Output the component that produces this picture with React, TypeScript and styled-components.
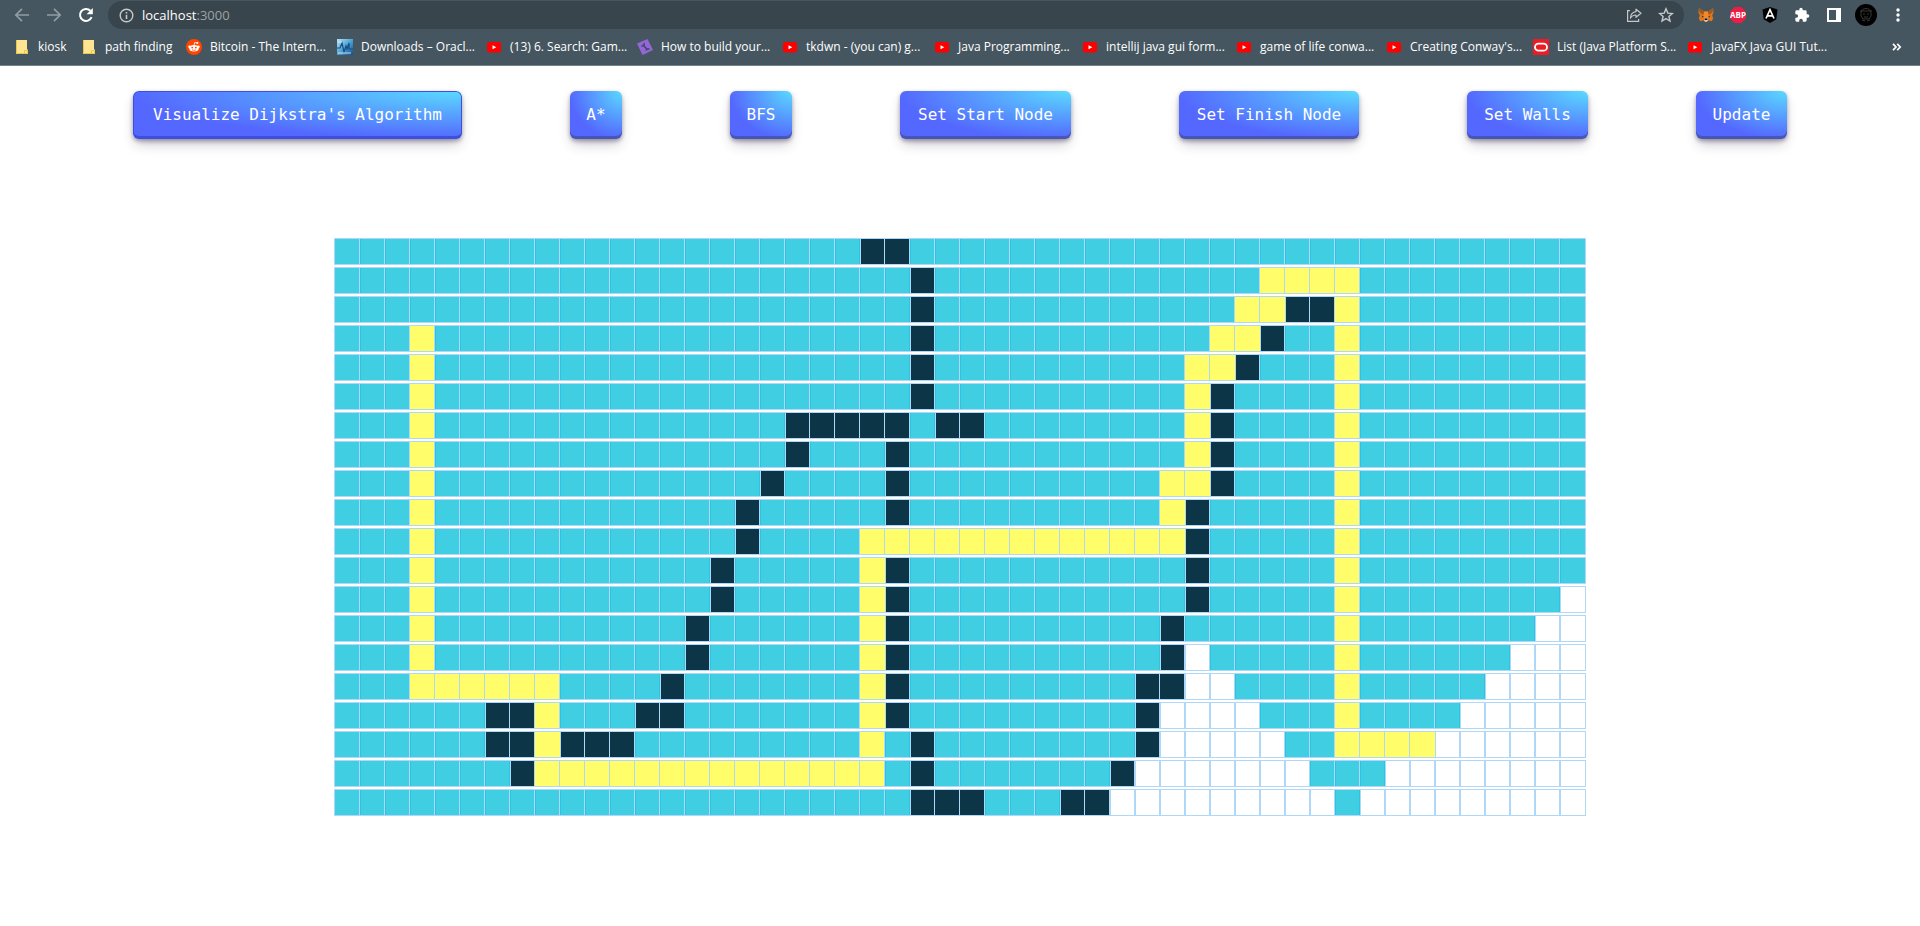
import React from 'react';
import styled, { createGlobalStyle, css } from 'styled-components';

const GlobalStyle = createGlobalStyle`
  *, *::before, *::after { box-sizing: border-box; }
  body { margin: 0; background: #fff; font-family: "Open Sans", "Noto Sans", sans-serif; }
`;

/* ---------- browser bar ---------- */

const BrowserBar = styled.header`
  background: #455660;
  border-bottom: 1px solid #74828a;
  height: 66px;
  overflow: hidden;
`;

const NavRow = styled.div`
  display: flex;
  align-items: center;
  height: 30px;
  padding: 0 14px;
`;

const NavButtons = styled.div`
  display: flex;
  gap: 16px;
  margin-right: 14px;
`;

const IconButton = styled.button<{ $dim?: boolean }>`
  display: flex;
  align-items: center;
  justify-content: center;
  width: 16px;
  height: 16px;
  padding: 0;
  border: 0;
  background: none;
  color: ${(p) => (p.$dim ? '#929ca1' : '#fff')};
`;

const AddressBar = styled.div`
  flex: 1;
  display: flex;
  align-items: center;
  gap: 8px;
  height: 28px;
  padding: 0 10px 0 11px;
  border-radius: 14px;
  background: #39454c;
  color: #c4c8ca;
`;

const AddressField = styled.label`
  flex: 1;
  position: relative;
  display: flex;
  align-items: center;
  font-size: 13px;
  line-height: 18px;
  color: #9ba2a6;
  b { font-weight: 400; color: #fff; }
`;

const AddressInput = styled.input`
  position: absolute;
  inset: 0;
  width: 100%;
  border: 0;
  padding: 0;
  background: transparent;
  outline: none;
`;

const AddressActions = styled.div`
  display: flex;
  gap: 16px;
  button { color: #c4c8ca; }
`;

const Extensions = styled.div`
  display: flex;
  align-items: center;
  gap: 16px;
  margin-left: 14px;
`;

const Avatar = styled.button`
  display: flex;
  width: 22px;
  height: 22px;
  margin: 0 -3px;
  padding: 0;
  border: 0;
  border-radius: 50%;
  background: #000;
`;

const BookmarkRow = styled.nav`
  display: flex;
  align-items: center;
  height: 34px;
  padding: 0 15px 0 14px;
`;

const Bookmark = styled.a<{ $width: number }>`
  flex: none;
  display: flex;
  align-items: center;
  gap: 8px;
  width: ${(p) => p.$width}px;
  font-size: 12px;
  line-height: 16px;
  color: #fff;
  white-space: nowrap;
  text-decoration: none;
  svg { flex: none; }
`;

const More = styled(IconButton)`
  margin-left: auto;
`;

const Back = () => (
  <svg width="16" height="16" viewBox="0 0 16 16" fill="none" stroke="currentColor" strokeWidth="1.7">
    <path d="M15 8H2M8 1.8 1.8 8 8 14.2" />
  </svg>
);
const Forward = () => (
  <svg width="16" height="16" viewBox="0 0 16 16" fill="none" stroke="currentColor" strokeWidth="1.7">
    <path d="M1 8h13M8 1.8 14.2 8 8 14.2" />
  </svg>
);
const Reload = () => (
  <svg width="16" height="16" viewBox="0 0 16 16" fill="none">
    <path d="M13.6 10.2A6 6 0 1 1 12.4 3.8" stroke="currentColor" strokeWidth="2" />
    <path d="M14.8 1v6.2H8.6z" fill="currentColor" />
  </svg>
);
const Info = () => (
  <svg width="15" height="15" viewBox="0 0 15 15" fill="none" stroke="currentColor">
    <circle cx="7.5" cy="7.5" r="6.3" strokeWidth="1.4" />
    <path d="M7.5 6.8V11M7.5 4v1.6" strokeWidth="1.6" />
  </svg>
);
const Share = () => (
  <svg width="16" height="16" viewBox="0 0 16 16" fill="none" stroke="currentColor" strokeWidth="1.2">
    <path d="M4 3.6H1.6v10.8h11V12" />
    <path d="M10 2.2 15 6.3l-5 4V8C7.4 8 5.6 9 4.4 11.2 4.6 7.6 6.6 5 10 4.6z" strokeLinejoin="round" />
  </svg>
);
const Star = () => (
  <svg width="16" height="16" viewBox="0 0 16 16" fill="none" stroke="currentColor" strokeWidth="1.4">
    <path d="m8 1.8 1.8 4.3 4.6.4-3.5 3 1.1 4.5L8 11.6 4 14l1.100-4.500-3.500-3 4.600-.4z" />
  </svg>
);
const Fox = () => (
  <svg width="18" height="16" viewBox="0 0 18 16">
    <path d="M1 .5 7 4h4l6-3.500.5 5L16 8l1 4-1.500 3-4-1L10 16H8l-1.500-2-4 1L1 12l1-4L.5 5.500z" fill="#e2761b" />
    <path d="M1 .5 7 4 6 8 1.500 5zM17 .5 11 4l1 4 4.500-3z" fill="#a4581c" />
    <path d="M7 4h4l1 5-1.500 3h-3L6 9z" fill="#f08a2a" />
    <path d="M4 8.600 6.600 10 5 10.700zM14 8.600 11.400 10l1.600.7z" fill="#2f343b" />
    <path d="M7 12h4l.5 2L10 15.500H8L6.500 14z" fill="#d7c1b3" />
    <path d="M7.600 12h2.800l.3 1.500H7.300z" fill="#161616" />
  </svg>
);
const AdBlock = () => (
  <svg width="16" height="16" viewBox="0 0 16 16">
    <path d="M4.700 0h6.600L16 4.700v6.600L11.300 16H4.700L0 11.300V4.700z" fill="#ed1e45" />
    <text x="8" y="11" textAnchor="middle" fontFamily="Open Sans, sans-serif" fontWeight="700" fontSize="8" fill="#fff">ABP</text>
  </svg>
);
const Shield = () => (
  <svg width="16" height="16" viewBox="0 0 16 16">
    <path d="m8 0 7.500 2.600-1.200 9.700L8 16l-6.300-3.700L.5 2.600z" fill="#000" />
    <path d="M4 11.500 8 2.700l4 8.800M5.600 8.800h4.800" fill="none" stroke="#fff" strokeWidth="1.700" />
  </svg>
);
const Puzzle = () => (
  <svg width="16" height="16" viewBox="0 0 24 24" fill="#fff">
    <path d="M20.500 11H19V7a2 2 0 0 0-2-2h-4V3.500a2.500 2.500 0 0 0-5 0V5H4a2 2 0 0 0-2 2v3.800h1.500a2.700 2.700 0 0 1 0 5.400H2V20a2 2 0 0 0 2 2h3.800v-1.500a2.700 2.700 0 0 1 5.400 0V22H17a2 2 0 0 0 2-2v-4h1.500a2.500 2.500 0 0 0 0-5z" />
  </svg>
);
const SidePanel = () => (
  <svg width="14" height="14" viewBox="0 0 14 14">
    <path d="M0 0h14v14H0zM2 2v10h7V2z" fill="#fff" fillRule="evenodd" />
  </svg>
);
const Face = () => (
  <svg width="22" height="22" viewBox="0 0 22 22" fill="none" stroke="#3c3c3c">
    <path d="M6 9c0-6 10-6 10 0v3l-2 3H8l-2-3zM5 7h12M8 10h2M12 10h2M9 13h4M7 16l3 1M15 16l-3 1" strokeWidth=".9" />
  </svg>
);
const Dots = () => (
  <svg width="4" height="14" viewBox="0 0 4 14" fill="#fff">
    <circle cx="2" cy="2" r="1.700" /><circle cx="2" cy="7" r="1.700" /><circle cx="2" cy="12" r="1.700" />
  </svg>
);
const Chevrons = () => (
  <svg width="10" height="8" viewBox="0 0 10 8" fill="none" stroke="#fff" strokeWidth="1.700">
    <path d="m1 .8 3 3.200-3 3.200M5.200.8l3 3.200-3 3.200" />
  </svg>
);

const Folder = () => (
  <svg width="16" height="16" viewBox="0 0 16 16">
    <path d="M2 1h11v9l1 1v4H2z" fill="#ffe591" />
    <path d="M2.500 1v13.500H11M10.500 14.500v-3h3v3z" fill="none" stroke="#e8c64e" />
  </svg>
);
const Reddit = () => (
  <svg width="16" height="16" viewBox="0 0 16 16">
    <circle cx="8" cy="8" r="8" fill="#ff4500" />
    <path d="M8 6.400 8.700 3.500l2.500.5" fill="none" stroke="#fff" strokeWidth=".8" />
    <circle cx="11.400" cy="4" r="1" fill="#fff" />
    <circle cx="3.500" cy="7.800" r="1.200" fill="#fff" /><circle cx="12.500" cy="7.800" r="1.200" fill="#fff" />
    <ellipse cx="8" cy="9.200" rx="4.700" ry="3.300" fill="#fff" />
    <circle cx="6.200" cy="8.600" r=".9" fill="#ff4500" /><circle cx="9.800" cy="8.600" r=".9" fill="#ff4500" />
    <path d="M6 10.800q2 1.200 4 0" fill="none" stroke="#ff4500" strokeWidth=".7" />
  </svg>
);
const Chart = () => (
  <svg width="16" height="16" viewBox="0 0 16 16">
    <defs>
      <linearGradient id="sea" x1="0" y1="0" x2="1" y2="1">
        <stop offset="0" stopColor="#b8e4f6" /><stop offset=".5" stopColor="#4fa3d4" /><stop offset="1" stopColor="#0d4f96" />
      </linearGradient>
    </defs>
    <path d="M0 0h16v16H0z" fill="url(#sea)" />
    <path d="M0 9h3l2-5 2 9 2-6 1 3 2-6v6h4" fill="none" stroke="#164f80" strokeWidth="1.200" />
    <path d="M1 3h4M1 14h13" stroke="#e8f8ff" strokeWidth=".8" />
  </svg>
);
const YouTube = () => (
  <svg width="16" height="16" viewBox="0 0 16 16">
    <rect x="1" y="3" width="14" height="10.500" rx="2" fill="#f00" />
    <path d="m6.500 6.300 3.800 2-3.800 2z" fill="#fff" />
  </svg>
);
const Tool = () => (
  <svg width="16" height="16" viewBox="0 0 16 16">
    <path d="M0 4.500 10.500 0 16 11 5.500 16z" fill="#9566d8" />
    <path d="m5.800 5.500 4.700 5.500" stroke="#3f4c70" strokeWidth="1.700" />
    <path d="M4.300 6.800c2 .8 3.700-1 2.800-2.900M9 11.800c.2-2 2.200-2.600 3.500-1.400" fill="none" stroke="#3f4c70" strokeWidth="1.300" />
  </svg>
);
const Oracle = () => (
  <svg width="16" height="16" viewBox="0 0 16 16">
    <path d="M0 0h16v16H0z" fill="#ec1c24" />
    <rect x="2" y="4.700" width="12" height="7" rx="3.500" fill="none" stroke="#fff" strokeWidth="1.800" />
  </svg>
);

const bookmarks: { label: string; icon: React.FC; width: number }[] = [
  { label: 'kiosk', icon: Folder, width: 67 },
  { label: 'path finding', icon: Folder, width: 105 },
  { label: 'Bitcoin - The Intern...', icon: Reddit, width: 151 },
  { label: 'Downloads – Oracl...', icon: Chart, width: 149 },
  { label: '(13) 6. Search: Gam...', icon: YouTube, width: 151 },
  { label: 'How to build your...', icon: Tool, width: 145 },
  { label: 'tkdwn - (you can) g...', icon: YouTube, width: 152 },
  { label: 'Java Programming...', icon: YouTube, width: 148 },
  { label: 'intellij java gui form...', icon: YouTube, width: 154 },
  { label: 'game of life conwa...', icon: YouTube, width: 150 },
  { label: "Creating Conway's...", icon: YouTube, width: 147 },
  { label: 'List (Java Platform S...', icon: Oracle, width: 154 },
  { label: 'JavaFX Java GUI Tut...', icon: YouTube, width: 150 },
];

/* ---------- page controls ---------- */

const Controls = styled.div`
  display: flex;
  justify-content: space-evenly;
  padding: 25px 25px 0;
`;

const ControlButton = styled.button<{ $width: number; $focused?: boolean }>`
  width: ${(p) => p.$width}px;
  height: 48px;
  padding: 0;
  border: 0;
  border-radius: 6px;
  background-image: radial-gradient(100% 100% at 100% 0, #5adaff 0, #5468ff 100%);
  box-shadow: rgba(45, 35, 66, 0.4) 0 2px 4px, rgba(45, 35, 66, 0.3) 0 7px 13px -3px,
    rgba(58, 65, 111, 0.5) 0 -3px 0 inset;
  color: #fff;
  font-family: "DejaVu Sans Mono", "Liberation Mono", monospace;
  font-size: 16px;
  line-height: 20px;
  white-space: nowrap;
  cursor: pointer;
  ${(p) =>
    p.$focused &&
    css`
      box-shadow: #3c4fe0 0 0 0 1px inset, rgba(45, 35, 66, 0.4) 0 2px 4px,
        rgba(45, 35, 66, 0.3) 0 7px 13px -3px, #3c4fe0 0 -3px 0 inset;
    `}
`;

const controls = [
  { label: "Visualize Dijkstra's Algorithm", width: 329, focused: true },
  { label: 'A*', width: 52 },
  { label: 'BFS', width: 62 },
  { label: 'Set Start Node', width: 171 },
  { label: 'Set Finish Node', width: 180 },
  { label: 'Set Walls', width: 121 },
  { label: 'Update', width: 91 },
];

/* ---------- grid ---------- */

type Kind = 'visited' | 'wall' | 'path' | 'open';

const Board = styled.main`
  display: flex;
  flex-direction: column;
  align-items: center;
  gap: 4px;
  padding: 100px 0;
`;

const BoardRow = styled.div`
  display: flex;
`;

const fills: Record<Kind, string> = {
  visited: 'rgba(0, 190, 218, 0.75)',
  wall: 'rgb(12, 53, 71)',
  path: 'rgb(255, 254, 106)',
  open: 'transparent',
};

/* Visited and path cells stack over the plain ones, so their outlines stay on top. */
const Cell = styled.div<{ $kind: Kind }>`
  position: relative;
  z-index: ${(p) => (p.$kind === 'visited' || p.$kind === 'path' ? 1 : 0)};
  width: 25px;
  height: 25px;
  outline: 1px solid rgb(175, 216, 248);
  background: ${(p) => fills[p.$kind]};
`;

const COLUMNS = 50;

type Span = [number, number];
type RowSpec = { wall?: Span[]; path?: Span[]; open?: Span[] };

const rows: RowSpec[] = [
  { wall: [[21, 22]] },
  { wall: [[23, 23]], path: [[37, 40]] },
  { wall: [[23, 23], [38, 39]], path: [[36, 37], [40, 40]] },
  { wall: [[23, 23], [37, 37]], path: [[3, 3], [35, 36], [40, 40]] },
  { wall: [[23, 23], [36, 36]], path: [[3, 3], [34, 35], [40, 40]] },
  { wall: [[23, 23], [35, 35]], path: [[3, 3], [34, 34], [40, 40]] },
  { wall: [[18, 22], [24, 25], [35, 35]], path: [[3, 3], [34, 34], [40, 40]] },
  { wall: [[18, 18], [22, 22], [35, 35]], path: [[3, 3], [34, 34], [40, 40]] },
  { wall: [[17, 17], [22, 22], [35, 35]], path: [[3, 3], [33, 34], [40, 40]] },
  { wall: [[16, 16], [22, 22], [34, 34]], path: [[3, 3], [33, 33], [40, 40]] },
  { wall: [[16, 16], [34, 34]], path: [[3, 3], [21, 33], [40, 40]] },
  { wall: [[15, 15], [22, 22], [34, 34]], path: [[3, 3], [21, 21], [40, 40]] },
  { wall: [[15, 15], [22, 22], [34, 34]], path: [[3, 3], [21, 21], [40, 40]], open: [[49, 49]] },
  { wall: [[14, 14], [22, 22], [33, 33]], path: [[3, 3], [21, 21], [40, 40]], open: [[48, 49]] },
  { wall: [[14, 14], [22, 22], [33, 33]], path: [[3, 3], [21, 21], [40, 40]], open: [[34, 34], [47, 49]] },
  { wall: [[13, 13], [22, 22], [32, 33]], path: [[3, 8], [21, 21], [40, 40]], open: [[34, 35], [46, 49]] },
  { wall: [[6, 7], [12, 13], [22, 22], [32, 32]], path: [[8, 8], [21, 21], [40, 40]], open: [[33, 36], [45, 49]] },
  { wall: [[6, 7], [9, 11], [23, 23], [32, 32]], path: [[8, 8], [21, 21], [40, 43]], open: [[33, 37], [44, 49]] },
  { wall: [[7, 7], [23, 23], [31, 31]], path: [[8, 21]], open: [[32, 38], [42, 49]] },
  { wall: [[23, 25], [29, 30]], open: [[31, 39], [41, 49]] },
];

const covers = (spans: Span[] | undefined, col: number) =>
  !!spans && spans.some(([from, to]) => col >= from && col <= to);

const kindAt = (row: RowSpec, col: number): Kind => {
  if (covers(row.wall, col)) return 'wall';
  if (covers(row.path, col)) return 'path';
  if (covers(row.open, col)) return 'open';
  return 'visited';
};

export default function App() {
  return (
    <>
      <GlobalStyle />
      <BrowserBar>
        <NavRow>
          <NavButtons>
            <IconButton $dim aria-label="Back"><Back /></IconButton>
            <IconButton $dim aria-label="Forward"><Forward /></IconButton>
            <IconButton aria-label="Reload"><Reload /></IconButton>
          </NavButtons>
          <AddressBar>
            <Info />
            <AddressField>
              <b>localhost</b>:3000
              <AddressInput type="text" aria-label="Address" />
            </AddressField>
            <AddressActions>
              <IconButton aria-label="Share"><Share /></IconButton>
              <IconButton aria-label="Bookmark this page"><Star /></IconButton>
            </AddressActions>
          </AddressBar>
          <Extensions>
            <IconButton aria-label="Wallet"><Fox /></IconButton>
            <IconButton aria-label="Ad blocker"><AdBlock /></IconButton>
            <IconButton aria-label="Developer tools"><Shield /></IconButton>
            <IconButton aria-label="Extensions"><Puzzle /></IconButton>
            <IconButton aria-label="Side panel"><SidePanel /></IconButton>
            <Avatar aria-label="Profile"><Face /></Avatar>
            <IconButton aria-label="Menu"><Dots /></IconButton>
          </Extensions>
        </NavRow>
        <BookmarkRow>
          {bookmarks.map(({ label, icon: Icon, width }) => (
            <Bookmark key={label} href="#" $width={width}>
              <Icon />
              {label}
            </Bookmark>
          ))}
          <More aria-label="More bookmarks"><Chevrons /></More>
        </BookmarkRow>
      </BrowserBar>

      <Controls>
        {controls.map(({ label, width, focused }) => (
          <ControlButton key={label} $width={width} $focused={focused}>
            {label}
          </ControlButton>
        ))}
      </Controls>

      <Board>
        {rows.map((row, r) => (
          <BoardRow key={r}>
            {Array.from({ length: COLUMNS }, (_, c) => (
              <Cell key={c} $kind={kindAt(row, c)} />
            ))}
          </BoardRow>
        ))}
      </Board>
    </>
  );
}
